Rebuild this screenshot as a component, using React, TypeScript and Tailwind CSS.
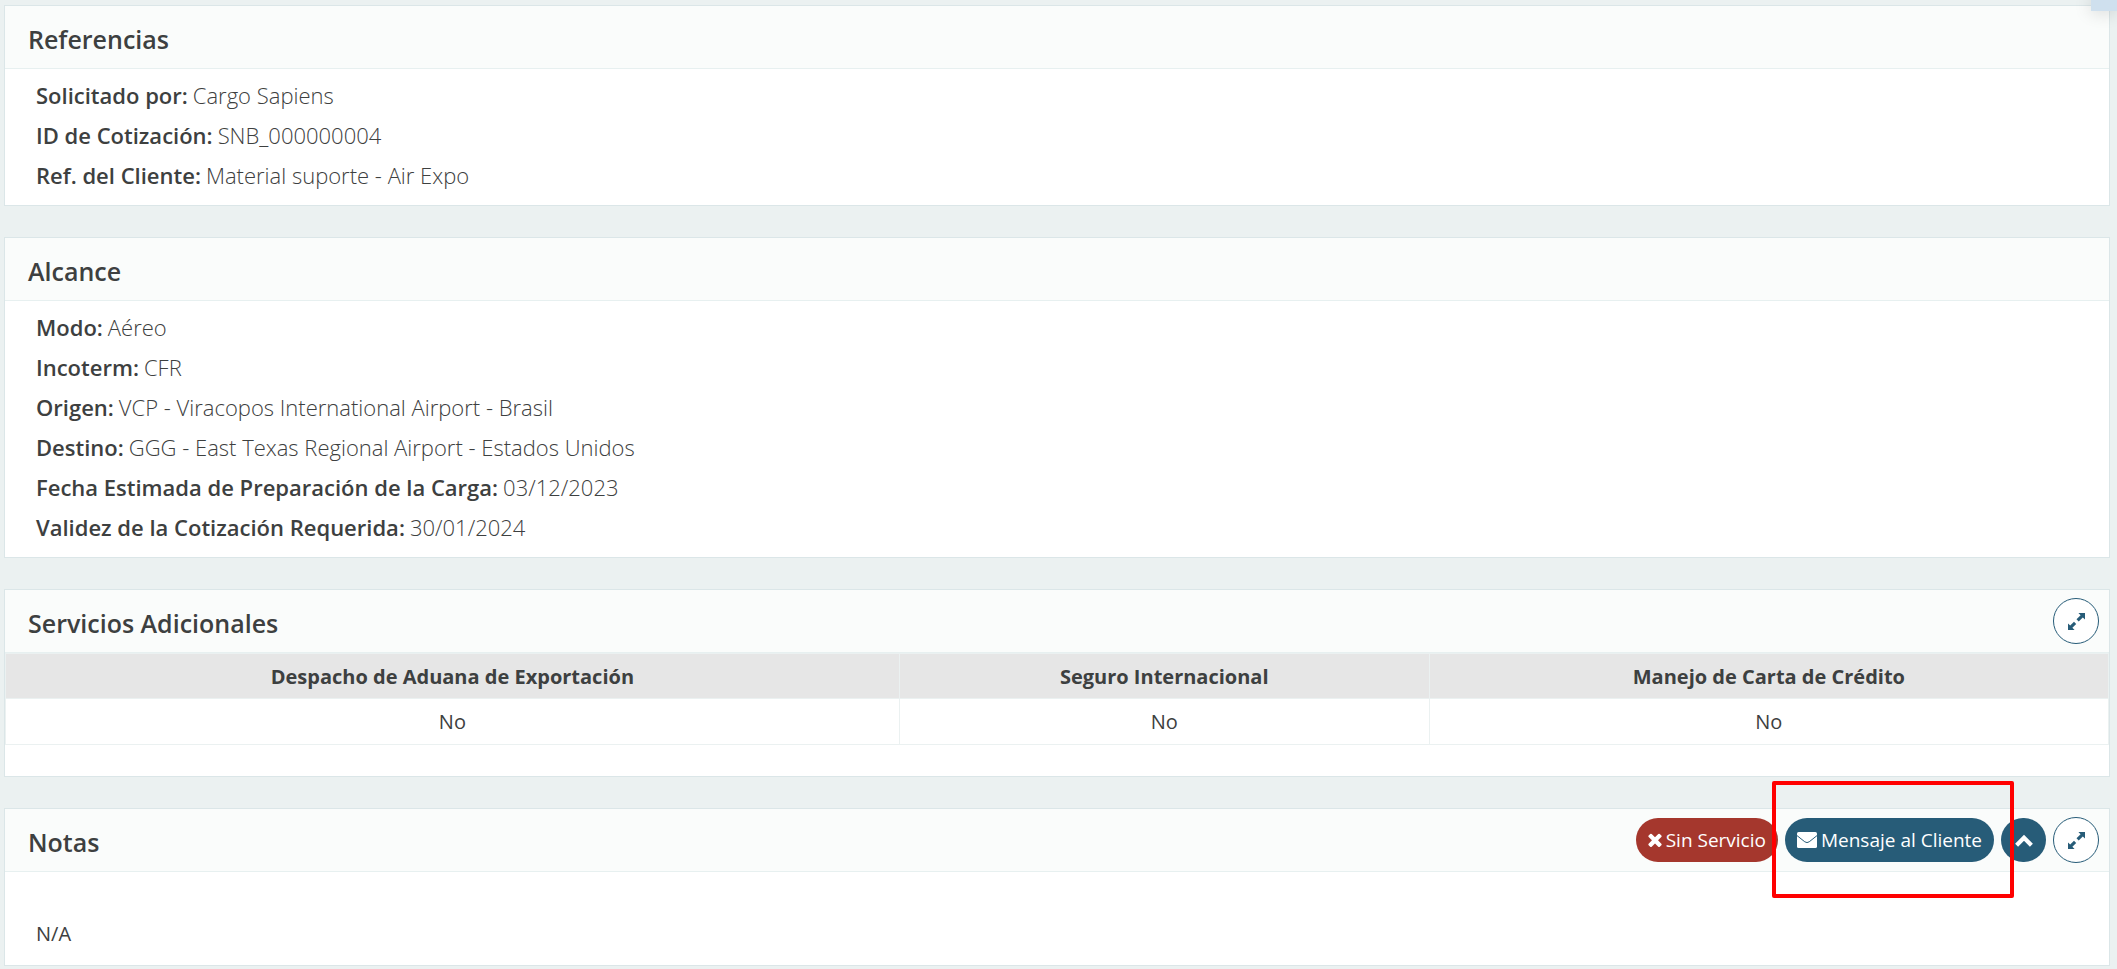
import type { ReactNode } from "react";

type CardProps = {
  title: string;
  actions?: ReactNode;
  children: ReactNode;
};

type Field = {
  label: string;
  value: string;
};

const references: Field[] = [
  { label: "Solicitado por:", value: "Cargo Sapiens" },
  { label: "ID de Cotización:", value: "SNB_000000004" },
  { label: "Ref. del Cliente:", value: "Material suporte - Air Expo" },
];

const scope: Field[] = [
  { label: "Modo:", value: "Aéreo" },
  { label: "Incoterm:", value: "CFR" },
  { label: "Origen:", value: "VCP - Viracopos International Airport - Brasil" },
  { label: "Destino:", value: "GGG - East Texas Regional Airport - Estados Unidos" },
  { label: "Fecha Estimada de Preparación de la Carga:", value: "03/12/2023" },
  { label: "Validez de la Cotización Requerida:", value: "30/01/2024" },
];

const services = [
  { name: "Despacho de Aduana de Exportación", value: "No" },
  { name: "Seguro Internacional", value: "No" },
  { name: "Manejo de Carta de Crédito", value: "No" },
];

function CloseIcon() {
  return (
    <svg viewBox="302 302 1188 1252" className="h-[14px] w-[14px]" fill="currentColor" aria-hidden="true">
      <path d="M1490 1322q0 40-28 68l-136 136q-28 28-68 28t-68-28l-294-294-294 294q-28 28-68 28t-68-28l-136-136q-28-28-28-68t28-68l294-294-294-294q-28-28-28-68t28-68l136-136q28-28 68-28t68 28l294 294 294-294q28-28 68-28t68 28l136 136q28 28 28 68t-28 68l-294 294 294 294q28 28 28 68z" />
    </svg>
  );
}

function EnvelopeIcon() {
  return (
    <svg viewBox="0 0 20 16" className="h-4 w-5" aria-hidden="true">
      <rect width="20" height="16" rx="1.6" fill="currentColor" />
      <path d="M0 3.6L7.800 9.800Q10 11.400 12.200 9.800L20 3.600" fill="none" stroke="#275c78" strokeWidth="1" />
    </svg>
  );
}

function ChevronUpIcon() {
  return (
    <svg viewBox="0 0 18 14" className="h-[14px] w-[18px]" fill="none" stroke="currentColor" strokeWidth="4.200" aria-hidden="true">
      <path d="M1.600 12.200L9 4.800l7.400 7.400" />
    </svg>
  );
}

function ExpandIcon() {
  return (
    <svg viewBox="0 0 17 17" className="h-[17px] w-[17px]" fill="currentColor" aria-hidden="true">
      <path d="M10.400 0H17v6.600l-2.200-2.200-4.100 4.100-2.200-2.200 4.100-4.100z" />
      <path d="M6.600 17H0v-6.600l2.200 2.200 3.800-3.800 2.200 2.200-3.800 3.800z" />
    </svg>
  );
}

function ExpandButton() {
  return (
    <button
      type="button"
      aria-label="Expandir"
      className="flex h-[46px] w-[46px] items-center justify-center rounded-full border border-[#275c78] bg-white text-[#275c78]"
    >
      <ExpandIcon />
    </button>
  );
}

function Card({ title, actions, children }: CardProps) {
  return (
    <section className="border border-[#dbe6e8] bg-white">
      <header className="flex h-[63px] items-center justify-between border-b border-[#e7f0f0] bg-[#fafcfb] pr-[10px] pl-[23px]">
        <h2 className="pt-1 text-[25px] leading-8 font-semibold">{title}</h2>
        {actions && <div className="flex items-center gap-[7px]">{actions}</div>}
      </header>
      {children}
    </section>
  );
}

function FieldList({ fields }: { fields: Field[] }) {
  return (
    <dl className="px-[31px] pt-[6px] pb-[10px] text-[22px] leading-10">
      {fields.map((field) => (
        <div key={field.label} className="flex flex-wrap gap-x-[5px]">
          <dt className="font-semibold">{field.label}</dt>
          <dd className="font-light">{field.value}</dd>
        </div>
      ))}
    </dl>
  );
}

export default function App() {
  return (
    <main className="relative flex min-h-screen flex-col gap-[31px] overflow-hidden bg-[#ebf1f1] pt-[5px] pr-[7px] pb-1 pl-1 font-['Open_Sans',sans-serif] text-[#3d4040]">
      <div className="absolute top-0 right-0 h-[11px] w-[26px] bg-[#cfe0ee] shadow-[0_0_18px_rgba(0,0,0,0.2)]" />

      <Card title="Referencias">
        <FieldList fields={references} />
      </Card>

      <Card title="Alcance">
        <FieldList fields={scope} />
      </Card>

      <Card title="Servicios Adicionales" actions={<ExpandButton />}>
        <table className="mb-[31px] w-full border-collapse border border-[#ebf1f1] text-center text-[20px] leading-7">
          <colgroup>
            <col className="w-[42.5%]" />
            <col className="w-[25.2%]" />
            <col />
          </colgroup>
          <thead>
            <tr className="bg-[#e6e6e6]">
              {services.map((service) => (
                <th key={service.name} scope="col" className="border border-[#ebf1f1] px-3 pt-[9px] pb-[7px] font-bold">
                  {service.name}
                </th>
              ))}
            </tr>
          </thead>
          <tbody>
            <tr>
              {services.map((service) => (
                <td key={service.name} className="border border-[#ebf1f1] px-3 pt-[9px] pb-2">
                  {service.value}
                </td>
              ))}
            </tr>
          </tbody>
        </table>
      </Card>

      <Card
        title="Notas"
        actions={
          <>
            <button type="button" className="flex h-11 items-center gap-1 rounded-full bg-[#a5372d] px-3 text-[19px] text-white">
              <CloseIcon />
              Sin Servicio
            </button>
            {/* Highlighted action */}
            <div className="relative">
              <button type="button" className="flex h-11 items-center gap-1 rounded-full bg-[#275c78] px-3 text-[19px] text-white">
                <EnvelopeIcon />
                Mensaje al Cliente
              </button>
              <div className="pointer-events-none absolute -top-[37px] -right-5 -bottom-9 -left-[13px] z-10 rounded-xs border-4 border-[#ff0000]" />
            </div>
            <button
              type="button"
              aria-label="Contraer"
              className="flex h-11 w-[45px] items-center justify-center rounded-full bg-[#275c78] text-white"
            >
              <ChevronUpIcon />
            </button>
            <ExpandButton />
          </>
        }
      >
        <p className="px-[31px] pt-12 pb-[17px] text-[20px] leading-7">N/A</p>
      </Card>
    </main>
  );
}
